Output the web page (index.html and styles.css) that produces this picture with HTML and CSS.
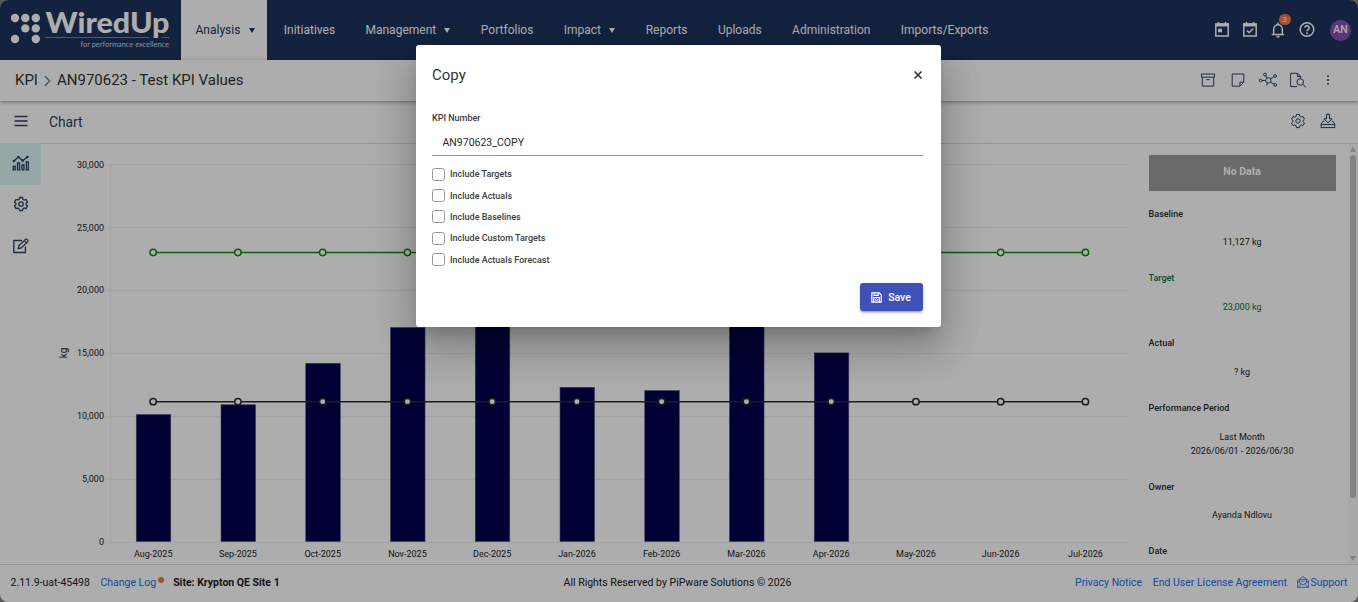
FILE: index.html
```html
<!DOCTYPE html>
<html lang="en">
<head>
    <meta charset="UTF-8">
    <meta name="viewport" content="width=device-width, initial-scale=1.0">
    <title>WiredUp - KPI</title>
    <link rel="stylesheet" href="styles.css">
</head>
<body>
    <div class="app">
        <header class="topbar">
            <svg class="logo" width="181" height="60" viewBox="0 0 181 60">
                <g fill="#fff">
                    <circle cx="15" cy="18" r="4.2"/><circle cx="25.3" cy="18" r="4.2"/><circle cx="35.8" cy="18" r="4.2"/>
                    <circle cx="25.3" cy="28.4" r="4.2"/><circle cx="35.8" cy="28.4" r="4.2"/>
                    <circle cx="15" cy="39" r="4.2"/><circle cx="35.8" cy="39" r="4.2"/>
                </g>
                <text class="logo-name" x="45.5" y="33.3" textLength="124" lengthAdjust="spacingAndGlyphs">WiredUp</text>
                <path d="M45 37.5H149M162 37.5H169" stroke="#8d9ab3" stroke-width=".8"/>
                <text class="logo-tag" x="80.5" y="47" textLength="88.5" lengthAdjust="spacingAndGlyphs">for performance excellence</text>
            </svg>
            <nav class="nav">
                <a class="nav-item active">Analysis <i class="caret"></i></a>
                <a class="nav-item">Initiatives</a>
                <a class="nav-item">Management <i class="caret"></i></a>
                <a class="nav-item">Portfolios</a>
                <a class="nav-item">Impact <i class="caret"></i></a>
                <a class="nav-item">Reports</a>
                <a class="nav-item">Uploads</a>
                <a class="nav-item">Administration</a>
                <a class="nav-item">Imports/Exports</a>
            </nav>
            <div class="top-icons">
                <svg width="16" height="18" viewBox="0 0 16 18"><path d="M1.8 3h12.4v12H1.8zM4.5 1v3M11.5 1v3" fill="none" stroke="#fff" stroke-width="1.5"/><path d="M1.3 2.5h13.4v3H1.3zM4 7.8h4v3.4H4z" fill="#fff"/></svg>
                <svg width="16" height="18" viewBox="0 0 16 18"><path d="M1.8 3h12.4v12H1.8zM4.5 1v3M11.5 1v3M5 9.5l2.2 2.2L11.3 7.5" fill="none" stroke="#fff" stroke-width="1.5"/><path d="M1.3 2.5h13.4v3H1.3z" fill="#fff"/></svg>
                <span class="bell">
                    <svg width="16" height="18" viewBox="0 0 16 18"><path d="M1.8 13.5h12.4M3.7 13.5V8a4.3 4.3 0 0 1 8.6 0v5.5M8 1.5v2" fill="none" stroke="#fff" stroke-width="1.5"/><path d="M6.3 15.2h3.4L8 16.9z" fill="#fff" stroke="#fff" stroke-width=".6"/></svg>
                    <b class="badge">3</b>
                </span>
                <svg width="16" height="18" viewBox="0 0 16 18"><circle cx="8" cy="8.5" r="6.8" fill="none" stroke="#fff" stroke-width="1.5"/><path d="M5.9 6.8a2.1 2.1 0 1 1 3.2 1.8Q8 9.3 8 10.3" fill="none" stroke="#fff" stroke-width="1.5"/><circle cx="8" cy="12.3" r=".95" fill="#fff"/></svg>
                <span class="avatar">AN</span>
            </div>
        </header>

        <div class="crumbs">
            <span>KPI</span>
            <svg class="chevron" width="7" height="12" viewBox="0 0 7 12"><path d="M1 1.2L5.6 6 1 10.8" fill="none" stroke="#6d7e96" stroke-width="1.4"/></svg>
            <span>AN970623 - Test KPI Values</span>
            <div class="crumb-icons line-icons">
                <svg width="20" height="18" viewBox="0 0 20 18"><path d="M3.5 3h13v3.2h-13zM4.3 6.2v8.9h11.4V6.2M8.3 8.7h3.4"/></svg>
                <svg width="20" height="18" viewBox="0 0 20 18"><path d="M4.2 3h11.6v8.2l-3.9 4H4.2zM15.8 11.2h-3.9v4"/></svg>
                <svg width="20" height="18" viewBox="0 0 20 18"><circle cx="10.4" cy="9.4" r="2.7"/><circle cx="2.6" cy="9.5" r="1.4"/><circle cx="7" cy="3.6" r="1.4"/><circle cx="17.1" cy="5" r="1.4"/><circle cx="17.2" cy="13.9" r="1.4"/><path d="M4 9.5h3.7M7.6 4.9l1.6 2.2M12.7 7.8l3.1-2M12.6 11l3.3 2.2M9.2 11.9l-.5 2.5"/></svg>
                <svg width="20" height="18" viewBox="0 0 20 18"><path d="M9 15.6H2.6V2.3h7l3 3v2.2M9.4 2.3v3.2h3.2"/><circle cx="12.3" cy="11" r="3.3"/><path d="M14.7 13.3l3.3 3"/></svg>
                <svg width="20" height="18" viewBox="0 0 20 18"><g class="dots"><circle cx="10" cy="5.2" r="1"/><circle cx="10" cy="9" r="1"/><circle cx="10" cy="12.8" r="1"/></g></svg>
            </div>
        </div>

        <main class="main">
            <aside class="side line-icons">
                <a class="side-item menu"><svg width="14" height="12" viewBox="0 0 14 12"><path d="M.5 1.5h13M.5 6h13M.5 10.5h13"/></svg></a>
                <a class="side-item active"><svg width="18" height="16" viewBox="0 0 18 16"><path d="M1.2 11.2h2v3.6h-2zM5.5 8h2v6.8h-2zM9.9 10h2v4.8h-2zM14.3 6.8h2v8h-2zM2 6l4.3-4 4.4 3.6L15.4 2"/><circle cx="2" cy="6" r=".7"/><circle cx="6.3" cy="2" r=".7"/><circle cx="10.7" cy="5.6" r=".7"/><circle cx="15.4" cy="2" r=".7"/></svg></a>
                <a class="side-item"><svg width="16" height="16" viewBox="0 0 16 16"><path d="M6.5 1.5h3l.4 1.8 1.3.8 1.8-.6 1.5 2.6-1.4 1.2v1.5l1.4 1.2-1.5 2.6-1.8-.6-1.3.8-.4 1.8h-3l-.4-1.8-1.3-.8-1.8.6L1.5 10l1.4-1.2V7.3L1.5 6.1 3 3.5l1.8.6 1.3-.8z"/><circle cx="8" cy="8" r="2.2"/></svg></a>
                <a class="side-item"><svg width="18" height="16" viewBox="0 0 18 16"><path d="M10 2.5H1.8v12h11.6V8.5M6.3 10.6l.7-3L13.6 1.400q1.2-.6 2 .2t.2 2L9.2 10zM12.3 2.6l2.3 2.3"/></svg></a>
            </aside>

            <section class="content">
                <div class="content-head">
                    <h2>Chart</h2>
                    <div class="head-icons line-icons">
                        <svg width="16" height="16" viewBox="0 0 16 16"><path d="M6.5 1.5h3l.4 1.8 1.3.8 1.8-.6 1.5 2.6-1.4 1.2v1.5l1.4 1.2-1.5 2.6-1.8-.6-1.3.8-.4 1.8h-3l-.4-1.8-1.3-.8-1.8.6L1.5 10l1.4-1.2V7.3L1.5 6.1 3 3.5l1.8.6 1.3-.8z"/><circle cx="8" cy="8" r="2.2"/></svg>
                        <svg width="16" height="16" viewBox="0 0 16 16"><path d="M6.500 1.200h3v4.600h2.500L8 10 4 5.800h2.500zM4.300 8.300H3l-1.900 3v3.300h13.700v-3.300l-1.900-3h-1.200M1.100 11.600h13.700"/></svg>
                    </div>
                </div>
                <div class="content-body">
                    <svg class="chart" id="chart" width="1090" height="420" viewBox="41 144 1090 420"></svg>

                    <div class="panel">
                        <div class="status">No Data</div>
                        <dl>
                            <dt>Baseline</dt><dd>11,127 kg</dd>
                            <dt class="green">Target</dt><dd class="green">23,000 kg</dd>
                            <dt>Actual</dt><dd>? kg</dd>
                            <dt>Performance Period</dt><dd>Last Month<br>2026/06/01 - 2026/06/30</dd>
                            <dt>Owner</dt><dd>Ayanda Ndlovu</dd>
                            <dt>Date</dt>
                        </dl>
                    </div>
                    <div class="scroll">
                        <i class="arrow up"></i>
                        <i class="thumb"></i>
                        <i class="arrow down"></i>
                    </div>
                </div>
            </section>
        </main>

        <footer class="footer">
            <div class="foot-left">
                <span>2.11.9-uat-45498</span>
                <a class="log">Change Log<i class="dot"></i></a>
                <b>Site: Krypton QE Site 1</b>
            </div>
            <div class="foot-center">All Rights Reserved by PiPware Solutions © 2026</div>
            <div class="foot-right">
                <a>Privacy Notice</a>
                <a>End User License Agreement</a>
                <a class="support"><svg width="12" height="12" viewBox="0 0 12 12"><path d="M.6 4.5L6 .6l5.4 3.9v6.9H.6zM.6 5.5L6 9l5.4-3.5M2.5 6.5V3.6h7v2.9M4.3 5.3h3.4M.8 11.2L4.5 8M11.2 11.2L7.5 8"/></svg>Support</a>
            </div>
        </footer>
    </div>

    <div class="backdrop">
        <div class="modal">
            <div class="modal-head">
                <h1>Copy</h1>
                <svg class="close" width="10" height="10" viewBox="0 0 10 10"><path d="M1.5 1.5l7 7M8.5 1.5l-7 7" stroke="#333" stroke-width="1.7"/></svg>
            </div>
            <label class="field-label" for="kpi-number">KPI Number</label>
            <input class="field" type="text" id="kpi-number" value="AN970623_COPY">
            <div class="checks">
                <label><input type="checkbox">Include Targets</label>
                <label><input type="checkbox">Include Actuals</label>
                <label><input type="checkbox">Include Baselines</label>
                <label><input type="checkbox">Include Custom Targets</label>
                <label><input type="checkbox">Include Actuals Forecast</label>
            </div>
            <button class="save">
                <svg width="11" height="11" viewBox="0 0 11 11"><path d="M.8.8h7.4l2 2v7.4H.8zM3 .8v2.6h4.200V.8M2.700 10V5.500h5.600V10" fill="none" stroke="#fff" stroke-width="1.2"/><circle cx="5.5" cy="7.7" r="1.1" fill="none" stroke="#fff"/></svg>
                Save
            </button>
        </div>
    </div>

    <script src="chart.js"></script>
</body>
</html>
```
FILE: styles.css
```css
* {
    margin: 0;
    padding: 0;
    box-sizing: border-box;
    font-family: Roboto, "Liberation Sans", sans-serif;
}

html {
    background: #85858a;
}

body {
    height: 100vh;
    overflow: hidden;
    font-size: 10.5px;
    color: #1c1c1c;
}

.app {
    height: 602px;
    display: flex;
    flex-direction: column;
    background: #fff;
    border-radius: 8px;
    overflow: hidden;
}

/* top bar */
.topbar {
    height: 60px;
    flex: none;
    display: flex;
    background: #1d345e;
    color: #fff;
}

.logo {
    flex: none;
}

.logo-name {
    font-family: Lato, sans-serif;
    font-weight: 900;
    font-size: 28px;
    fill: #fff;
}

.logo-tag {
    font-family: Lato, sans-serif;
    font-size: 7.5px;
    fill: #ccd3df;
}

.nav {
    display: flex;
}

.nav-item {
    display: flex;
    align-items: center;
    padding: 0 15.2px;
    font-size: 12px;
}

.nav-item.active {
    width: 86px;
    padding: 0 0 0 14.5px;
    margin-right: 1.6px;
    background: #fff;
    color: #1d345e;
}

.caret {
    margin-left: 8.3px;
    border: 3.5px solid transparent;
    border-top: 5px solid currentColor;
    border-bottom: 0;
}

.top-icons {
    margin-left: auto;
    padding-right: 7px;
    display: flex;
    align-items: center;
    gap: 12.3px;
}

.bell {
    position: relative;
    height: 18px;
}

.badge {
    position: absolute;
    left: 8.5px;
    top: -7px;
    width: 12px;
    height: 11px;
    border-radius: 6px;
    background: #f0774e;
    font-size: 7.5px;
    font-weight: 400;
    line-height: 11px;
    text-align: center;
}

.avatar {
    width: 21px;
    height: 21px;
    margin-left: 3px;
    border-radius: 50%;
    background: #8650b4;
    font-size: 10.5px;
    font-weight: 500;
    line-height: 20px;
    text-align: center;
}

.top-icons > svg,
.bell {
    margin-top: -1px;
}

/* icons drawn with strokes */
.line-icons svg {
    fill: none;
    stroke: #2c4260;
    stroke-width: 1;
}

.line-icons .dots {
    fill: #2c4260;
    stroke: none;
}

/* breadcrumbs */
.crumbs {
    position: relative;
    height: 41px;
    flex: none;
    display: flex;
    align-items: center;
    padding: 0 20px 1px 15px;
    font-size: 15px;
    color: #333;
    box-shadow: 0 1px 4px rgba(0, 0, 0, 0.4);
}

.chevron {
    margin: 2px 6px 0;
}

.crumb-icons {
    margin-left: auto;
    display: flex;
    gap: 10px;
}

/* left menu and content */
.main {
    height: 463px;
    display: flex;
}

.side {
    width: 41px;
    flex: none;
}

.side-item {
    height: 41.5px;
    display: flex;
    align-items: center;
    justify-content: center;
    padding-bottom: 2px;
}

.side-item svg {
    stroke-width: 1.3;
}

.side-item.menu {
    height: 42px;
    padding-bottom: 3px;
}

.side-item.active {
    background: #def7f7;
}

.content {
    flex: 1;
}

.content-head {
    height: 43px;
    display: flex;
    align-items: center;
    justify-content: space-between;
    padding: 0 22px 0 8px;
    border-bottom: 1px solid #dcdcdc;
}

.content-head h2 {
    font-size: 13.8px;
    font-weight: 400;
    color: #2c4260;
}

.head-icons {
    display: flex;
    gap: 14px;
    margin-top: -2px;
}

.content-body {
    height: 420px;
    display: flex;
    overflow: hidden;
}

/* chart */
.chart {
    flex: none;
}

.chart text {
    font-size: 9px;
    fill: #222;
}

.chart .unit {
    font-size: 10px;
}

.chart .grid {
    stroke: #f0f0f0;
}

.chart .bar {
    fill: #00004d;
    stroke: #55557f;
    stroke-width: 0.6;
}

.chart .line {
    fill: none;
    stroke-width: 1.5;
}

.chart .point {
    fill: #fff;
    stroke-width: 1.5;
}

.chart .target {
    stroke: #118a11;
}

.chart .baseline {
    stroke: #2b2b2b;
}

/* kpi details */
.panel {
    width: 205px;
    padding: 11px 0 0 17.6px;
    font-size: 9px;
}

.status {
    width: 187px;
    height: 36px;
    margin-bottom: 15.6px;
    background: #9c9c9c;
    color: #fff;
    font-size: 10.5px;
    font-weight: 700;
    line-height: 33px;
    text-align: center;
}

.panel dt {
    height: 29.9px;
    line-height: 15px;
    font-weight: 500;
    color: #2b2b2b;
}

.panel dd {
    width: 187px;
    margin-bottom: 21.1px;
    line-height: 13.8px;
    text-align: center;
}

.panel dl .green {
    color: #00753a;
}

.scroll {
    width: 10px;
    margin-left: auto;
    display: flex;
    flex-direction: column;
    align-items: center;
    background: #fafafa;
}

.thumb {
    width: 6px;
    height: 343px;
    margin-top: 3px;
    border-radius: 3px;
    background: #c1c1c1;
}

.arrow {
    border: 3px solid transparent;
}

.arrow.up {
    margin-top: 3px;
    border-top: 0;
    border-bottom: 5px solid #c1c1c1;
}

.arrow.down {
    margin: auto 0 3px;
    border-bottom: 0;
    border-top: 5px solid #c1c1c1;
}

/* footer */
.footer {
    height: 38px;
    display: flex;
    align-items: center;
    justify-content: space-between;
    padding: 0 10.5px 3px;
    border-top: 1px solid #dcdcdc;
}

.footer a {
    color: #1a6df0;
}

.foot-left,
.foot-right {
    flex: 1;
    display: flex;
    gap: 10.5px;
}

.foot-left b {
    font-weight: 700;
    margin-left: -1.5px;
}

.foot-center {
    margin-right: 3px;
}

.foot-right {
    justify-content: flex-end;
}

.dot {
    display: inline-block;
    width: 6px;
    height: 6px;
    margin-left: 2px;
    border-radius: 50%;
    background: #f0774e;
    vertical-align: 3px;
}

.support {
    display: flex;
    align-items: center;
    gap: 1px;
}

.support svg {
    fill: none;
    stroke: #1a6df0;
    stroke-width: 0.8;
}

/* dialog */
.backdrop {
    position: absolute;
    inset: 0;
    background: rgba(0, 0, 0, 0.32);
}

.modal {
    width: 525px;
    height: 282px;
    margin: 45px 0 0 416px;
    padding: 16px 18px 16px 16px;
    display: flex;
    flex-direction: column;
    background: #fff;
    border-radius: 3px;
    box-shadow: 0 11px 15px -7px rgba(0, 0, 0, 0.2), 0 24px 38px 3px rgba(0, 0, 0, 0.14), 0 9px 46px 8px rgba(0, 0, 0, 0.12);
}

.modal-head {
    height: 28px;
    display: flex;
    align-items: center;
    justify-content: space-between;
}

.modal-head h1 {
    font-size: 15px;
    font-weight: 400;
    color: #333;
}

.close {
    margin-right: 0.4px;
}

.field-label {
    margin-top: 22px;
    font-size: 9px;
    font-weight: 500;
    line-height: 14px;
    color: #3d3d3d;
}

.field {
    height: 31px;
    padding: 4px 10.5px 0;
    border: none;
    border-bottom: 1px solid #949494;
    font-size: 10.5px;
    color: #2b2b2b;
    outline: none;
}

.checks {
    margin-top: 8px;
}

.checks label {
    display: flex;
    align-items: center;
    height: 21.4px;
    padding-bottom: 1px;
    font-size: 9px;
    font-weight: 500;
    color: #3d3d3d;
}

.checks input {
    appearance: none;
    width: 13px;
    height: 13px;
    margin: 0 5px 0 0;
    border: 1px solid #999;
    border-radius: 2.5px;
}

.save {
    width: 63px;
    height: 28px;
    margin: auto 0 0 auto;
    padding-right: 1px;
    display: flex;
    align-items: center;
    justify-content: center;
    gap: 6px;
    border: none;
    border-radius: 3px;
    background: #3f51b5;
    color: #fff;
    font-size: 10.5px;
    font-weight: 500;
    box-shadow: 0 3px 1px -2px rgba(0, 0, 0, 0.2), 0 2px 2px rgba(0, 0, 0, 0.14), 0 1px 5px rgba(0, 0, 0, 0.12);
}
```
FILE: chart.js
```js
const months = ['Aug-2025', 'Sep-2025', 'Oct-2025', 'Nov-2025', 'Dec-2025', 'Jan-2026', 'Feb-2026', 'Mar-2026', 'Apr-2026', 'May-2026', 'Jun-2026', 'Jul-2026'];
const actuals = [10100, 10880, 14180, 17030, 19500, 12270, 12010, 18200, 15010];
const target = 23000;
const baseline = 11127;

const left = 110.8;
const step = 84.75;
const bottom = 541.5;

const x = i => left + step * (i + 0.5);
const y = value => bottom - value * 0.012567;

let out = '';

// grid and value axis
for (let v = 0; v <= 30000; v += 5000) {
    const gy = Math.round(y(v)) + 0.5;
    out += `<path class="grid" d="M108 ${gy}H1128"/>`;
    out += `<text x="104" y="${y(v) + 3.3}" text-anchor="end">${v.toLocaleString('en-US')}</text>`;
}
out += `<path class="grid" d="M110.5 164V542"/>`;
for (let i = 0; i <= months.length; i++) {
    out += `<path class="grid" d="M${left + step * i} 542v3"/>`;
}
out += `<text class="unit" transform="translate(66.5 353) rotate(-90)" text-anchor="middle">kg</text>`;

actuals.forEach((v, i) => {
    out += `<rect class="bar" x="${x(i) - 16.9}" y="${y(v)}" width="34.5" height="${bottom - y(v)}"/>`;
});

months.forEach((m, i) => {
    out += `<text x="${x(i)}" y="557" text-anchor="middle">${m}</text>`;
});

[['target', target], ['baseline', baseline]].forEach(([name, v]) => {
    out += `<path class="line ${name}" d="M${x(0)} ${y(v)}H${x(11)}"/>`;
    months.forEach((m, i) => {
        out += `<circle class="point ${name}" cx="${x(i)}" cy="${y(v)}" r="3.2"/>`;
    });
});

document.getElementById('chart').innerHTML = out;
```
